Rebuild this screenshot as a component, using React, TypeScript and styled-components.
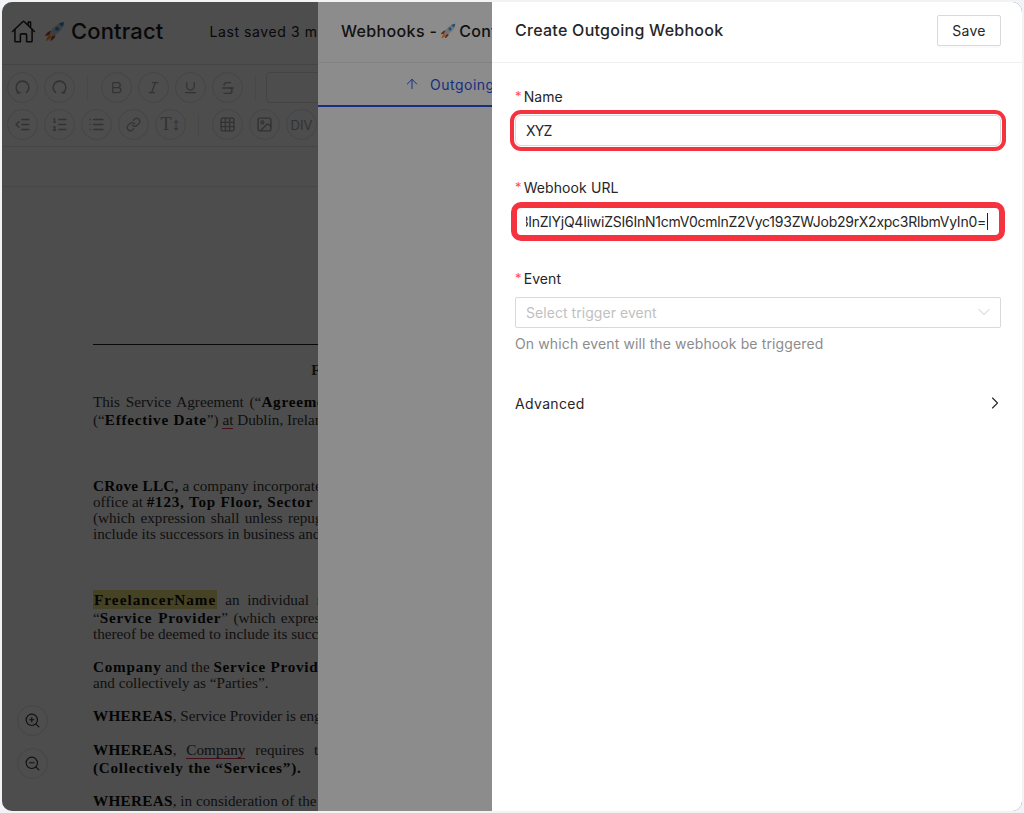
import React from 'react';
import styled, { createGlobalStyle } from 'styled-components';
import { IoHomeOutline } from 'react-icons/io5';
import {
  ArrowUp,
  Bold,
  ChevronDown,
  ChevronRight,
  Grid3x3,
  Image,
  IndentDecrease,
  Italic,
  Link,
  List,
  ListOrdered,
  Strikethrough,
  Underline,
  ZoomIn,
  ZoomOut,
} from 'lucide-react';

const GlobalStyle = createGlobalStyle`
  html, body {
    margin: 0;
    height: 100%;
    background: #f2f3f7;
  }
  * {
    box-sizing: border-box;
  }
  body {
    font-family: Inter, "Noto Sans", sans-serif;
    overflow: hidden;
  }
`;

const Rocket = ({ size }: { size: number }) => (
  <svg width={size} height={size} viewBox="0 0 24 24">
    <path d="M9 11c-3 0-6 2-8 6l6-1z" fill="#d8382e" />
    <path d="M13 16c0 3-2 5-6 7l2-6z" fill="#d8382e" />
    <path d="M6 16c-2 1-3 4-4 7 3-1 6-3 7-5z" fill="#f2a31b" />
    <path d="M8 18 6 16C8 9 14 3 23 1c-1 9-7 14-15 17z" fill="#c4d3dc" />
    <path d="M17 2.500c1 2 2.500 3 4.500 4L23 1z" fill="#3f8fc4" />
    <circle cx="15" cy="9" r="2.200" fill="#3f8fc4" />
  </svg>
);

// the toolbar's undo and redo are open arcs, mirrored for redo
const HistoryIcon = ({ redo }: { redo?: boolean }) => (
  <svg
    width={17}
    height={17}
    viewBox="0 0 24 24"
    fill="none"
    stroke="currentColor"
    strokeWidth={2.2}
    style={redo ? { transform: 'scaleX(-1)' } : undefined}
  >
    <path d="M7 19.500A9 9 0 1 1 17 19.500" />
    <path d="M4.500 19.500h4" strokeLinecap="round" />
  </svg>
);

const Frame = styled.div`
  position: relative;
  width: 1020px;
  height: 809px;
  margin: 2px;
  border-radius: 10px;
  overflow: hidden;
  background: #fff;
`;

const Editor = styled.div`
  display: flex;
  flex-direction: column;
  height: 100%;
`;

const EditorHeader = styled.header`
  display: flex;
  align-items: center;
  height: 63px;
  flex-shrink: 0;
  padding: 0 0 4px 9px;
  border-bottom: 1px solid #e8e8e8;
  color: #222;
`;

const DocTitle = styled.div`
  display: flex;
  align-items: center;
  gap: 6px;
  margin-left: 8px;
  font-size: 22px;
  font-weight: 500;
  letter-spacing: 0.15px;
`;

const SavedAt = styled.span`
  margin-left: 46px;
  font-size: 14px;
  letter-spacing: 0.6px;
  white-space: nowrap;
`;

const Toolbar = styled.div`
  display: flex;
  flex-direction: column;
  gap: 6px;
  height: 82px;
  flex-shrink: 0;
  padding: 7px 0 0 5px;
  border-bottom: 1px solid #e8e8e8;
`;

const ToolRow = styled.div`
  display: flex;
  align-items: center;
  gap: 7px;
`;

const ToolButton = styled.div`
  display: flex;
  align-items: center;
  justify-content: center;
  width: 31px;
  height: 31px;
  margin-right: -1px;
  border-radius: 50%;
  border: 1px solid #e4e4e4;
  color: #aaa;
  font-size: 13px;
`;

const ToolSeparator = styled.span`
  width: 1px;
  height: 22px;
  margin: 0 6px;
  background: #ececec;
`;

const FontSelect = styled.div`
  width: 120px;
  height: 31px;
  margin-left: -3px;
  border: 1px solid #e4e4e4;
  border-radius: 4px;
`;

const TextSizeGlyph = styled.span`
  font-family: "Liberation Serif", serif;
  font-size: 18px;
`;

const RulerBar = styled.div`
  height: 40px;
  flex-shrink: 0;
  border-bottom: 1px solid #ececec;
`;

const Page = styled.article`
  flex: 1;
  overflow: hidden;
  width: 900px;
  padding: 157px 0 0 91px;
  font-family: "Liberation Serif", serif;
  font-size: 15.2px;
  line-height: 16px;
  color: #3a3a3a;
`;

const PageRule = styled.hr`
  width: 500px;
  margin: 0;
  border: 0;
  border-top: 1px solid #222;
`;

const PageHeading = styled.h2`
  width: 700px;
  margin: 16px 0 0;
  font-size: 15px;
  line-height: 18px;
  text-align: center;
  white-space: nowrap;
`;

const Paragraph = styled.p<{ $top: number; $line?: number }>`
  width: 640px;
  margin: ${(p) => p.$top}px 0 0;
  line-height: ${(p) => p.$line ?? 16}px;
`;

const Line = styled.span<{ $height?: number }>`
  display: block;
  white-space: nowrap;
  ${(p) => (p.$height ? `height: ${p.$height}px;` : '')}
`;

const Strong = styled.b<{ $tight?: boolean }>`
  color: #111;
  letter-spacing: ${(p) => (p.$tight ? 0.3 : 0.75)}px;
`;

const Highlight = styled.b`
  background: #e9dc78;
  color: #111;
  padding: 1px 1px;
  letter-spacing: 1.05px;
`;

const Spell = styled.span`
  border-bottom: 1px solid #e0305a;
`;

const Wide = styled.span<{ $gap: number }>`
  word-spacing: ${(p) => p.$gap}px;
`;

const ZoomStack = styled.div`
  position: absolute;
  left: 15px;
  bottom: 32px;
  display: flex;
  flex-direction: column;
  gap: 12px;
`;

const ZoomButton = styled(ToolButton)`
  background: #fff;
  color: #333;
`;

const Mask = styled.div`
  position: absolute;
  inset: 0;
  background: rgba(0, 0, 0, 0.45);
`;

const Drawer = styled.aside<{ $left: number }>`
  position: absolute;
  top: 0;
  right: 0;
  bottom: 0;
  left: ${(p) => p.$left}px;
  display: flex;
  flex-direction: column;
  background: #fff;
  overflow: hidden;
`;

const ListHeader = styled.div`
  display: flex;
  align-items: center;
  gap: 3px;
  height: 61px;
  flex-shrink: 0;
  padding: 0 0 2px 23px;
  border-bottom: 1px solid #eee;
  font-size: 16px;
  font-weight: 500;
  color: #222;
  letter-spacing: 0.35px;
  white-space: nowrap;
`;

const Tab = styled.div`
  display: flex;
  align-items: center;
  gap: 10px;
  height: 44px;
  padding: 0 0 0 86px;
  border-bottom: 2px solid #2f54eb;
  color: #2f54eb;
  font-size: 14px;
  letter-spacing: 0.5px;
`;

const FormHeader = styled.div`
  display: flex;
  align-items: center;
  justify-content: space-between;
  height: 61px;
  flex-shrink: 0;
  padding: 0 21px 4px 23px;
  border-bottom: 1px solid #f0f0f0;
`;

const FormTitle = styled.h1`
  margin: 0;
  font-size: 16px;
  font-weight: 500;
  letter-spacing: 0.27px;
  color: #262626;
`;

const SaveButton = styled.button`
  width: 64px;
  height: 31px;
  padding: 0;
  background: #fff;
  border: 1px solid #d9d9d9;
  border-radius: 2px;
  box-shadow: 0 2px 0 rgba(0, 0, 0, 0.02);
  font-family: inherit;
  font-size: 14px;
  letter-spacing: 0.3px;
  color: #262626;
`;

const Form = styled.div`
  display: flex;
  flex-direction: column;
  padding: 22px 21px 0 23px;
`;

const Field = styled.div`
  display: flex;
  flex-direction: column;
  margin-bottom: 30px;
`;

const Label = styled.label`
  display: flex;
  align-items: center;
  gap: 2px;
  height: 22px;
  margin-bottom: 8px;
  font-size: 14px;
  letter-spacing: 0.1px;
  color: #262626;

  &::before {
    content: '*';
    color: #ff4d4f;
    font-size: 13px;
  }
`;

const TextBox = styled.div`
  display: flex;
  align-items: center;
  height: 31px;
  padding: 0 10px;
  background: #fff;
  border: 1px solid #d9d9d9;
  border-radius: 2px;
  font-size: 14px;
  color: #262626;
  white-space: nowrap;
`;

const NameInput = styled(TextBox)`
  letter-spacing: -0.8px;
  border-radius: 6px;
  outline: 4px solid #f5333f;
  outline-offset: 1px;
`;

const UrlInput = styled(TextBox)`
  padding: 0 12px 0 10px;
  border-radius: 6px;
  outline: 6px solid #f5333f;
  outline-offset: -2px;
`;

const UrlValue = styled.div`
  display: flex;
  flex: 1;
  align-items: center;
  justify-content: flex-end;
  min-width: 0;
  overflow: hidden;
  letter-spacing: -0.25px;
`;

const Caret = styled.span`
  flex-shrink: 0;
  width: 1px;
  height: 17px;
  margin-left: 1px;
  background: #222;
`;

const SelectBox = styled(TextBox)`
  justify-content: space-between;
  padding-bottom: 1px;
  color: #bfbfbf;
  letter-spacing: 0.05px;

  svg {
    margin-right: -4px;
  }
`;

const Hint = styled.div`
  margin-top: 5px;
  font-size: 14px;
  line-height: 22px;
  letter-spacing: 0.12px;
  color: #8c8c8c;
`;

const Advanced = styled.div`
  display: flex;
  align-items: center;
  justify-content: space-between;
  margin-top: 8px;
  font-size: 14px;
  letter-spacing: 0.35px;
  color: #262626;

  svg {
    margin-right: -4px;
  }
`;

const App = () => {
  return (
    <>
      <GlobalStyle />
      <Frame>
        <Editor>
          <EditorHeader>
            <IoHomeOutline size={25} />
            <DocTitle>
              <Rocket size={21} />
              Contract
            </DocTitle>
            <SavedAt>Last saved 3 minutes ago</SavedAt>
          </EditorHeader>
          <Toolbar>
            <ToolRow>
              <ToolButton><HistoryIcon /></ToolButton>
              <ToolButton><HistoryIcon redo /></ToolButton>
              <ToolSeparator />
              <ToolButton><Bold size={15} /></ToolButton>
              <ToolButton><Italic size={15} /></ToolButton>
              <ToolButton><Underline size={15} /></ToolButton>
              <ToolButton><Strikethrough size={16} /></ToolButton>
              <ToolSeparator />
              <FontSelect />
            </ToolRow>
            <ToolRow>
              <ToolButton><IndentDecrease size={17} /></ToolButton>
              <ToolButton><ListOrdered size={17} /></ToolButton>
              <ToolButton><List size={17} /></ToolButton>
              <ToolButton><Link size={15} /></ToolButton>
              <ToolButton><TextSizeGlyph>T↕</TextSizeGlyph></ToolButton>
              <ToolSeparator />
              <ToolButton><Grid3x3 size={17} /></ToolButton>
              <ToolButton><Image size={17} /></ToolButton>
              <ToolButton>DIV</ToolButton>
            </ToolRow>
          </Toolbar>
          <RulerBar />
          <Page>
            <PageRule />
            <PageHeading>FREELANCE SERVICE AGREEMENT</PageHeading>
            <Paragraph $top={14} $line={18}>
              <Line><Wide $gap={2}>This Service Agreement (“<Strong>Agreement</Strong>”) is made on this</Wide></Line>
              <Line>(“<Strong>Effective Date</Strong>”) <Spell>at</Spell> Dublin, Ireland</Line>
            </Paragraph>
            <Paragraph $top={49}>
              <Line><Strong $tight>CRove LLC,</Strong> a company incorporated under</Line>
              <Line>office at <Strong>#123, Top Floor, Sector</Strong> 15</Line>
              <Line><Wide $gap={1.5}>(which expression shall unless repugnant</Wide></Line>
              <Line>include its successors in business and assigns</Line>
            </Paragraph>
            <Paragraph $top={50}>
              <Line $height={18}><Highlight>FreelancerName</Highlight><Wide $gap={4}>  an individual residing</Wide></Line>
              <Line><Wide $gap={1.5}>“<Strong>Service Provider</Strong>” (which expression</Wide></Line>
              <Line>thereof be deemed to include its successors</Line>
            </Paragraph>
            <Paragraph $top={17}>
              <Line><Strong>Company</Strong> and the <Strong>Service Provider</Strong> are</Line>
              <Line>and collectively as “Parties”.</Line>
            </Paragraph>
            <Paragraph $top={17}>
              <Line><Strong $tight>WHEREAS</Strong>, Service Provider is engaged in</Line>
            </Paragraph>
            <Paragraph $top={17} $line={18}>
              <Line><Wide $gap={6}><Strong $tight>WHEREAS</Strong>, <Spell>Company</Spell> requires the</Wide></Line>
              <Line><Strong>(Collectively the “Services”).</Strong></Line>
            </Paragraph>
            <Paragraph $top={16}>
              <Line><Strong $tight>WHEREAS</Strong>, in consideration of the</Line>
            </Paragraph>
          </Page>
        </Editor>
        <ZoomStack>
          <ZoomButton><ZoomIn size={17} strokeWidth={1.6} /></ZoomButton>
          <ZoomButton><ZoomOut size={17} strokeWidth={1.6} /></ZoomButton>
        </ZoomStack>
        <Mask />
        <Drawer $left={316}>
          <ListHeader>
            Webhooks - <Rocket size={16} /> Contract
          </ListHeader>
          <Tab>
            <ArrowUp size={16} strokeWidth={1.5} />
            Outgoing Webhooks
          </Tab>
        </Drawer>
        <Mask />
        <Drawer $left={490}>
          <FormHeader>
            <FormTitle>Create Outgoing Webhook</FormTitle>
            <SaveButton>Save</SaveButton>
          </FormHeader>
          <Form>
            <Field>
              <Label>Name</Label>
              <NameInput>XYZ</NameInput>
            </Field>
            <Field>
              <Label>Webhook URL</Label>
              <UrlInput>
                <UrlValue>
                  eyJ0IjoiNzZkMjIzN3InZlYjQ4IiwiZSI6InN1cmV0cmlnZ2Vyc193ZWJob29rX2xpc3RlbmVyIn0=
                  <Caret />
                </UrlValue>
              </UrlInput>
            </Field>
            <Field>
              <Label>Event</Label>
              <SelectBox>
                Select trigger event
                <ChevronDown size={20} strokeWidth={1} />
              </SelectBox>
              <Hint>On which event will the webhook be triggered</Hint>
            </Field>
            <Advanced>
              Advanced
              <ChevronRight size={20} strokeWidth={1.3} />
            </Advanced>
          </Form>
        </Drawer>
      </Frame>
    </>
  );
};

export default App;
